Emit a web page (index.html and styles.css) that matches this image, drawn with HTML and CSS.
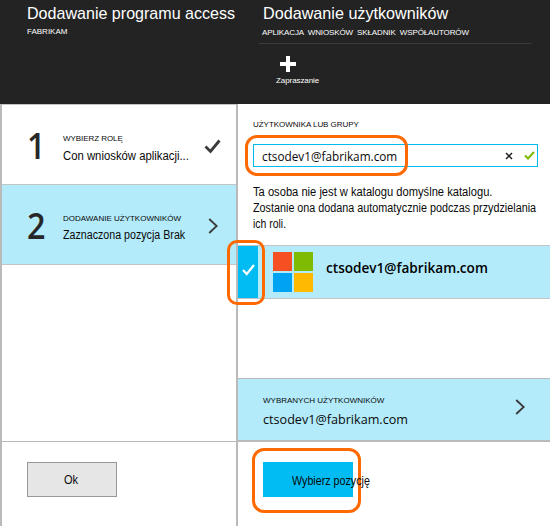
FILE: index.html
```html
<!DOCTYPE html>
<html lang="pl">
<head>
<meta charset="utf-8">
<title>Dodawanie użytkowników</title>
<link rel="stylesheet" href="styles.css">
</head>
<body>
<main class="blades">
  <section class="blade blade-steps">
    <header class="head">
      <h1 class="title title-steps"><span>Dodawanie programu access</span></h1>
      <p class="sub sub-steps"><span>FABRIKAM</span></p>
    </header>
    <div class="body">
      <div class="step">
        <span class="num">1</span>
        <div class="step-text">
          <p class="cap cap-role"><span>WYBIERZ ROLĘ</span></p>
          <p class="val val-role"><span>Con wniosków aplikacji...</span></p>
        </div>
        <svg class="tick" width="18" height="16" viewBox="0 0 18 16"><path d="M1.5 7.5 L6.5 12.5 L15.5 1.5" fill="none" stroke="#3a3a3a" stroke-width="2.8"/></svg>
      </div>
      <div class="step active">
        <span class="num">2</span>
        <div class="step-text">
          <p class="cap cap-add"><span>DODAWANIE UŻYTKOWNIKÓW</span></p>
          <p class="val val-add"><span>Zaznaczona pozycja Brak</span></p>
        </div>
        <svg class="arrow" width="11" height="18" viewBox="0 0 11 18"><path d="M1.2 2 L8.7 9 L1.2 16" fill="none" stroke="#3a3a3a" stroke-width="1.8"/></svg>
      </div>
      <div class="spacer"></div>
      <footer class="foot"><button class="btn ok"><span>Ok</span></button></footer>
    </div>
  </section>
  <section class="blade blade-users">
    <header class="head">
      <h1 class="title title-users"><span>Dodawanie użytkowników</span></h1>
      <p class="sub sub-users"><span>APLIKACJA WNIOSKÓW SKŁADNIK WSPÓŁAUTORÓW</span></p>
      <div class="invite">
        <svg width="16" height="16" viewBox="0 0 16 16"><path d="M6 0h4v6h6v4h-6v6h-4v-6h-6v-4h6z" fill="#fff"/></svg>
        <span class="invite-label">Zapraszanie</span>
      </div>
    </header>
    <div class="body">
      <div class="search">
        <p class="cap cap-group"><span>UŻYTKOWNIKA LUB GRUPY</span></p>
        <div class="field">
          <p class="mail mail-field"><span>ctsodev1@fabrikam.com</span></p>
          <svg class="clear" width="8" height="8" viewBox="0 0 8 8"><path d="M1 1 L7 7 M7 1 L1 7" stroke="#222" stroke-width="1.5"/></svg>
          <svg class="valid" width="11" height="9" viewBox="0 0 11 9"><path d="M1 4.5 L4 7.5 L10 1" fill="none" stroke="#7fba00" stroke-width="2"/></svg>
          <i class="ring ring-field"></i>
        </div>
        <p class="note"><span class="n1">Ta osoba nie jest w katalogu domyślne katalogu.</span><br><span class="n2">Zostanie ona dodana automatycznie podczas przydzielania</span><br><span class="n3">ich roli.</span></p>
      </div>
      <div class="user">
        <div class="check">
          <svg width="13" height="12" viewBox="0 0 13 12"><path d="M1 6 L4.7 10 L12 1" fill="none" stroke="#fff" stroke-width="2.2"/></svg>
        </div>
        <svg class="logo" width="40" height="40" viewBox="0 0 40 40"><path fill="#f65022" d="M0 0h19v19H0z"/><path fill="#80bb03" d="M21 0h19v19H21z"/><path fill="#00a3f1" d="M0 21h19v19H0z"/><path fill="#ffb901" d="M21 21h19v19H21z"/></svg>
        <span class="mail mail-user">ctsodev1@fabrikam.com</span>
        <i class="ring ring-check"></i>
      </div>
      <div class="spacer"></div>
      <div class="selected">
        <div class="sel-text">
          <p class="cap cap-selected"><span>WYBRANYCH UŻYTKOWNIKÓW</span></p>
          <p class="mail mail-selected"><span>ctsodev1@fabrikam.com</span></p>
        </div>
        <svg class="arrow" width="11" height="18" viewBox="0 0 11 18"><path d="M1.2 2 L8.7 9 L1.2 16" fill="none" stroke="#3a3a3a" stroke-width="1.8"/></svg>
      </div>
      <footer class="foot foot-users">
        <div class="pick-wrap"><i class="ring ring-pick"></i><button class="btn pick"><span>Wybierz pozycję</span></button></div>
      </footer>
    </div>
  </section>
</main>
</body>
</html>
```
FILE: styles.css
```css
* { box-sizing: border-box; }
body { margin: 0; width: 550px; height: 526px; overflow: hidden; background: #fff; color: #0a0a0a; font-family: "Liberation Sans", Arial, sans-serif; }
h1, p { margin: 0; font-weight: 400; white-space: nowrap; }
svg { display: block; flex: none; }
.blades { display: grid; grid-template-columns: 236px 314px; height: 526px; }
.blade { display: flex; flex-direction: column; min-width: 0; }
.head { height: 104px; flex: none; padding: 3px 0 0 27px; background: #232323; color: #fff; }
.body { flex: 1; display: flex; flex-direction: column; border-left: 2px solid #bababa; min-height: 0; }
.spacer { flex: 1; }

/* Condensed labels */
.title span, .val span, .note span, .mail span, .pick span, .ok span { display: inline-block; transform-origin: 0 50%; }

.title { font-size: 17px; line-height: 22px; }
.title-steps span { transform: scaleX(.945); }
.title-users span { transform: scaleX(.951); }
.sub { font-size: 8px; line-height: 12px; padding-top: 1px; }

.step { height: 80px; flex: none; display: flex; border-top: 1px solid #c4c4c4; padding-left: 25px; }
.active { height: 81px; background: #b3ebfb; border-bottom: 1px solid #c4c4c4; }
.num { width: 36px; height: 79px; font: 600 36px/82px "Open Sans", "Noto Sans", sans-serif; color: #272727; transform: scaleX(.9); transform-origin: 0 50%; }
.step-text { width: 140px; padding-top: 28px; }
.cap { font-size: 8px; line-height: 12px; }
.cap-role { letter-spacing: -.06px; }
.cap-group { letter-spacing: -.04px; }
.val { font-size: 12px; line-height: 16px; margin-top: 3px; }
.val-role span { transform: scaleX(.944); }
.val-add { margin-top: 2px; }
.val-add span { transform: scaleX(.889); }
.tick { margin: 34px 0 0 1px; }
.step .arrow { margin: 32px 0 0 5px; }
.foot { height: 85px; flex: none; border-top: 1px solid #bababa; padding: 20px 0 0 25px; }
.btn { display: block; width: 90px; height: 35px; border: 0; padding: 0; font: 12px/35px "Liberation Sans", Arial, sans-serif; color: #0a0a0a; white-space: nowrap; }
.ok { border: 1px solid #999; background: #e6e6e6; line-height: 35px; padding-left: 36px; text-align: left; }
.ok span { transform: scaleX(.92); }

.blade-users .head { padding-left: 27px; }
.sub-users { margin-top: 1px; padding-bottom: 4px; margin-left: -4px; padding-left: 3px; width: 273px; border-bottom: 1px solid #3a3a3a; word-spacing: 2px; letter-spacing: -.12px; }
.invite { margin-top: 12px; padding-left: 13px; }
.invite svg { margin-left: 4px; }
.invite-label { display: block; font-size: 8px; line-height: 12px; margin-top: 3px; letter-spacing: -.08px; }
.search { height: 141px; flex: none; padding: 15px 0 0 15px; }
.field { position: relative; display: flex; align-items: center; width: 285px; height: 23px; margin-top: 13px; border: 1px solid #00b9ef; padding-left: 8px; }
.mail { font-family: "Open Sans", "Noto Sans", sans-serif; font-size: 13px; line-height: 18px; color: #0a0a0a; }
.mail-field { width: 243px; }
.mail-field span { transform: scaleX(.905); }
.clear { margin-right: 11px; }
.note { margin-top: 17px; font-size: 12px; line-height: 16px; }
.n1 { transform: scaleX(.93); }
.n2 { transform: scaleX(.899); }
.n3 { transform: scaleX(.87); }
.user { position: relative; display: flex; height: 54px; flex: none; background: #b3ebfb; border: solid #c4c4c4; border-width: 1px 0; }
.check { width: 20px; background: #00bcf2; padding: 18px 0 0 4px; }
.logo { margin: 6px 0 0 15px; }
.mail-user { margin: 13px 0 0 13px; font-weight: 600; font-size: 13.6px; color: #000; }
.selected { display: flex; height: 62px; flex: none; background: #b3ebfb; border-top: 1px solid #bababa; padding-left: 25px; }
.sel-text { width: 252px; padding-top: 16px; }
.mail-selected { margin-top: 3px; }
.mail-selected span { transform: scaleX(.97); }
.selected .arrow { margin-top: 19px; }
.foot-users { height: 86px; border-top-width: 2px; }
.pick-wrap { position: relative; width: 90px; }
.pick { position: relative; background: #00bcf2; padding-left: 29px; text-align: left; line-height: 39px; }
.pick span { transform: scaleX(.893); }
.ring { position: absolute; border: 3px solid #ff6a00; border-radius: 12px; }
.ring-field { left: -9px; top: -10px; width: 163px; height: 41px; }
.ring-check { left: -11px; top: -6px; width: 38px; height: 65px; border-radius: 10px; }
.ring-pick { left: -11px; top: -14px; width: 109px; height: 65px; }
```
